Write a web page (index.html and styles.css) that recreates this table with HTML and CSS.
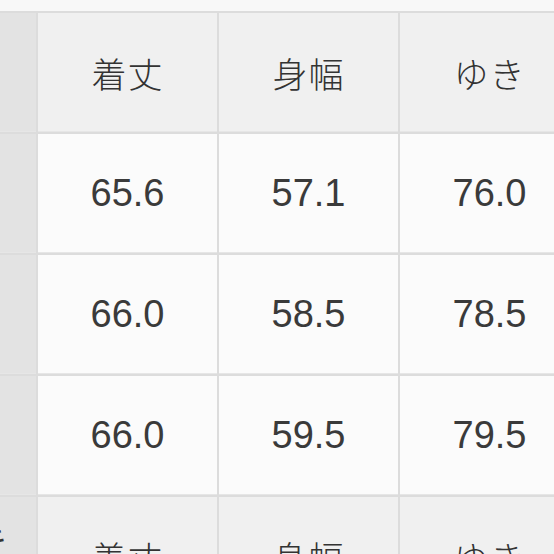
FILE: index.html
```html
<!DOCTYPE html>
<html lang="ja">
<head>
<meta charset="utf-8">
<link rel="stylesheet" href="styles.css">
</head>
<body>
<div class="viewport">
  <div class="table">
    <div class="cell side"></div>
    <div class="cell head">着丈</div>
    <div class="cell head">身幅</div>
    <div class="cell head">ゆき</div>

    <div class="cell side"></div>
    <div class="cell num">65.6</div>
    <div class="cell num">57.1</div>
    <div class="cell num">76.0</div>

    <div class="cell side"></div>
    <div class="cell num">66.0</div>
    <div class="cell num">58.5</div>
    <div class="cell num">78.5</div>

    <div class="cell side"></div>
    <div class="cell num">66.0</div>
    <div class="cell num">59.5</div>
    <div class="cell num">79.5</div>

    <div class="cell side label">キ</div>
    <div class="cell head">着丈</div>
    <div class="cell head">身幅</div>
    <div class="cell head">ゆき</div>
  </div>
</div>
</body>
</html>
```
FILE: styles.css
```css
html, body {
  margin: 0;
  padding: 0;
  background: #f8f8f8;
}
.viewport {
  width: 554px;
  height: 554px;
  overflow: hidden;
  background: #f8f8f8;
}
.table {
  margin-top: 11px;
  margin-left: -144px;
  padding-top: 2px;
  display: grid;
  grid-template-columns: 180px 179px 179px 179px;
  grid-auto-rows: 119px;
  gap: 2px;
  background: #dcdcdc;
  width: max-content;
}
.cell {
  display: flex;
  align-items: center;
  justify-content: center;
  color: #333;
  font-family: "Noto Sans CJK JP", "Liberation Sans", sans-serif;
  font-size: 35px;
  font-weight: 300;
  box-shadow: inset 0 -1px 0 #e6e6e6;
}
.side {
  background: #e3e3e3;
}
.label {
  align-items: flex-start;
  justify-content: flex-end;
  padding-right: 29px;
  padding-top: 17px;
  font-size: 32px;
  font-weight: 400;
  line-height: 46px;
}
.head {
  background: #f0f0f0;
  letter-spacing: 1px;
}
.num {
  background: #fbfbfb;
  font-family: "Liberation Sans", Arial, sans-serif;
  font-weight: 400;
  font-size: 38px;
  color: #3a3a3a;
}
```
